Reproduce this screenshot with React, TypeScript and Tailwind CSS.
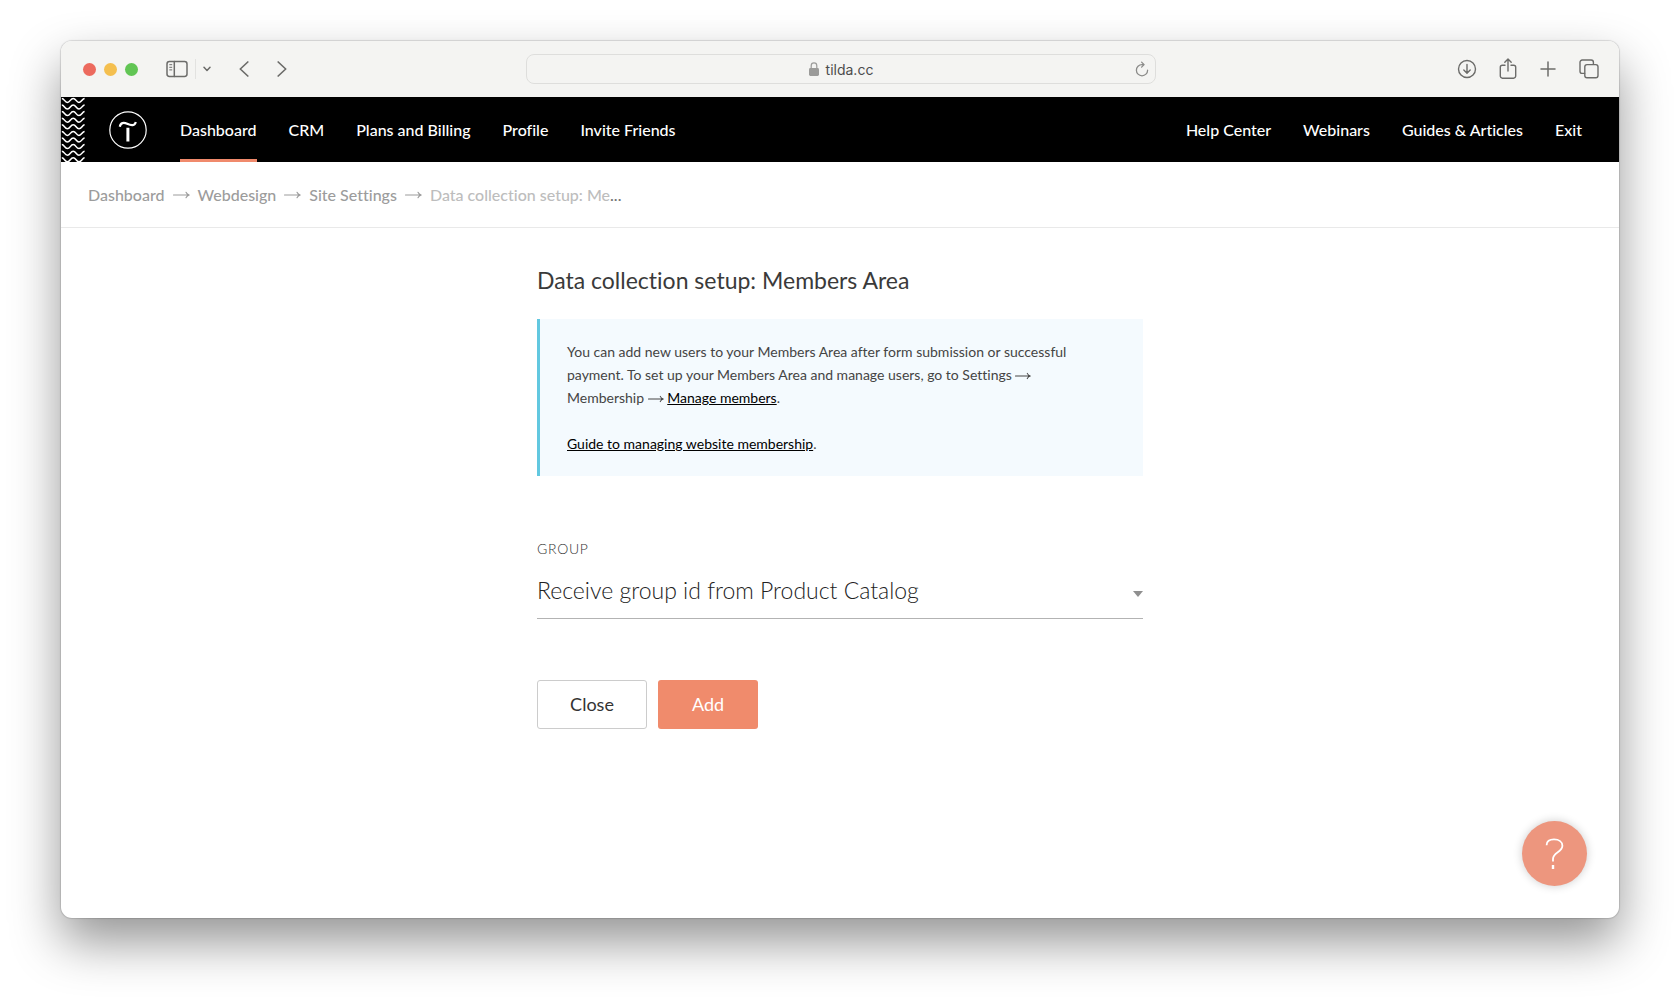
import React from "react";

const leftLinks = ["Dashboard", "CRM", "Plans and Billing", "Profile", "Invite Friends"];
const rightLinks = ["Help Center", "Webinars", "Guides & Articles", "Exit"];
const crumbs = ["Dashboard", "Webdesign", "Site Settings"];
const waveRows = [-1, 0, 1, 2, 3, 4, 5, 6, 7, 8, 9];

const stroke = {
  fill: "none",
  stroke: "currentColor",
  strokeLinecap: "round" as const,
  strokeLinejoin: "round" as const,
};

function Arrow({ className }: { className: string }) {
  return (
    <svg viewBox="0 0 17 8" className={className} {...stroke} strokeWidth="1.1" aria-hidden="true">
      <path d="M0.5 4H16M13 1.2Q14 3.4 16.2 4Q14 4.6 13 6.8" />
    </svg>
  );
}

function BrowserBar() {
  return (
    <div className="flex h-14 shrink-0 items-center bg-[#f4f4f2] text-[#6c6c6a]">
      <div className="flex flex-1 items-center pl-[22px]">
        <div className="flex gap-2">
          <span className="size-[13px] rounded-full bg-[#ec6a5e]" />
          <span className="size-[13px] rounded-full bg-[#f4bf4f]" />
          <span className="size-[13px] rounded-full bg-[#61c554]" />
        </div>
        <button type="button" aria-label="Sidebar" className="ml-7">
          <svg viewBox="0 0 22 18" className="h-[18px] w-[22px]" {...stroke} strokeWidth="1.5">
            <rect x="1" y="1.5" width="20" height="15" rx="2.4" />
            <path d="M8.3 1.5V16.5" />
            <path d="M3.7 4.7H5.8M3.7 7.3H5.8M3.7 9.9H5.8" strokeWidth="1" />
          </svg>
        </button>
        <span className="ml-[7px] h-5 w-px bg-[#e2e2e0]" />
        <button type="button" aria-label="Tab groups" className="ml-[7px]">
          <svg viewBox="0 0 8 6" className="h-[6px] w-2" {...stroke} strokeWidth="1.5">
            <path d="M1 1.2L4 4.4L7 1.2" />
          </svg>
        </button>
        <button type="button" aria-label="Back" className="ml-7">
          <svg viewBox="0 0 10 16" className="h-4 w-[10px]" {...stroke} strokeWidth="1.7">
            <path d="M8.8 1L1.3 8L8.8 15" />
          </svg>
        </button>
        <button type="button" aria-label="Forward" className="ml-7">
          <svg viewBox="0 0 10 16" className="h-4 w-[10px]" {...stroke} strokeWidth="1.7">
            <path d="M1.2 1L8.7 8L1.2 15" />
          </svg>
        </button>
      </div>

      <div className="relative flex h-[30px] w-[630px] items-center justify-center gap-[7px] rounded-lg border border-[#dededc] font-['Inter',sans-serif] text-[14px] text-[#4c4c4c]">
        <svg viewBox="0 0 10 14" className="h-[14px] w-[10px] text-[#9b9b99]" aria-hidden="true">
          <rect x="0" y="6" width="10" height="8" rx="1.4" fill="currentColor" />
          <path d="M2.2 6.5V3.8A2.8 2.9 0 0 1 7.8 3.8V6.5" fill="none" stroke="currentColor" strokeWidth="1.2" />
        </svg>
        <span>tilda.cc</span>
        <button type="button" aria-label="Reload" className="absolute right-[6px]">
          <svg viewBox="0 0 14 16" className="h-4 w-[14px] text-[#8b8b89]" {...stroke} strokeWidth="1.3">
            <path d="M12.6 9.2A5.6 5.6 0 1 1 7 3.6H8.8M6.6 1.1L9.1 3.6L6.6 6.1" />
          </svg>
        </button>
      </div>

      <div className="flex flex-1 items-center justify-end gap-[22px] pr-5">
        <button type="button" aria-label="Downloads">
          <svg viewBox="0 0 20 20" className="size-5" {...stroke} strokeWidth="1.4">
            <circle cx="10" cy="10" r="8.5" />
            <path d="M10 5.4V14M6.8 11L10 14.2L13.2 11" />
          </svg>
        </button>
        <button type="button" aria-label="Share">
          <svg viewBox="0 0 18 22" className="h-[22px] w-[18px]" {...stroke} strokeWidth="1.4">
            <path d="M6 7.2H3.4A2.1 2.1 0 0 0 1.3 9.3V18.1A2.1 2.1 0 0 0 3.4 20.2H14.6A2.1 2.1 0 0 0 16.7 18.1V9.3A2.1 2.1 0 0 0 14.6 7.2H12" />
            <path d="M9 13V1.2M5.8 4.2L9 1L12.2 4.2" />
          </svg>
        </button>
        <button type="button" aria-label="New tab">
          <svg viewBox="0 0 18 18" className="size-[18px]" {...stroke} strokeWidth="1.5">
            <path d="M9 2V16M2 9H16" />
          </svg>
        </button>
        <button type="button" aria-label="Show tabs">
          <svg viewBox="0 0 20 20" className="size-5" {...stroke} strokeWidth="1.4">
            <rect x="5.8" y="5.6" width="13.2" height="13.2" rx="2.2" />
            <path d="M5.6 14.4H3.2A2.2 2.2 0 0 1 1 12.2V3.2A2.2 2.2 0 0 1 3.2 1H12.2A2.2 2.2 0 0 1 14.4 3.2V5.4" />
          </svg>
        </button>
      </div>
    </div>
  );
}

function SiteNav() {
  return (
    <header className="flex h-[65px] shrink-0 bg-black text-[16px] font-medium text-white">
      <svg viewBox="0 0 24 65" className="h-full w-6 shrink-0" fill="none" stroke="#fff" strokeWidth="1.5" aria-hidden="true">
        {waveRows.map((row) => (
          <path
            key={row}
            transform={`translate(0 ${row * 6.6})`}
            d="M0.8 1.4C3.4 1.4 3.6 5.4 6.4 5.4S9.4 1.4 12.2 1.4S15.2 5.4 18 5.4S21.2 1.4 23.6 1.4"
          />
        ))}
      </svg>
      <a href="#home" aria-label="Tilda" className="ml-6 self-center">
        <svg viewBox="0 0 38 38" className="size-[38px]" aria-hidden="true">
          <circle cx="19" cy="19" r="18.2" fill="none" stroke="#fff" strokeWidth="1.2" />
          <path
            d="M10.8 15.8C11.6 11.6 14.6 11.2 18.2 12.8C22.4 14.8 25.8 15 26.8 11"
            fill="none"
            stroke="#fff"
            strokeWidth="2.2"
          />
          <path d="M18.9 16.8V30.4" fill="none" stroke="#fff" strokeWidth="3" />
        </svg>
      </a>
      <nav className="ml-[33px] flex gap-8">
        {leftLinks.map((l, i) => (
          <a
            key={l}
            href="#nav"
            className={
              i === 0
                ? "flex items-center border-y-[3px] border-t-transparent border-b-[#f08a6c]"
                : "flex items-center"
            }
          >
            {l}
          </a>
        ))}
      </nav>
      <nav className="ml-auto flex gap-8 pr-[37px]">
        {rightLinks.map((l) => (
          <a key={l} href="#nav" className="flex items-center">
            {l}
          </a>
        ))}
      </nav>
    </header>
  );
}

export default function App() {
  return (
    <div className="min-h-screen bg-white px-[61px] pt-[41px] pb-[81px] font-['Lato',sans-serif] [font-variant-ligatures:none]">
      <div className="relative flex min-h-[877px] flex-col overflow-hidden rounded-[11px] bg-white shadow-[0_0_1px_1px_rgba(0,0,0,0.13),0_24px_50px_rgba(0,0,0,0.42)]">
        <BrowserBar />
        <SiteNav />
        <div className="flex h-[66px] shrink-0 items-center gap-2 border-b border-[#e9e9e9] pl-[27px] text-[16px] font-medium text-[#9c9c9c]">
          {crumbs.map((c) => (
            <React.Fragment key={c}>
              <a href="#crumb">{c}</a>
              <Arrow className="h-2 w-[17px]" />
            </React.Fragment>
          ))}
          <span className="text-[#bdbdbd]">
            Data collection setup: Me<span className="text-[#777]">...</span>
          </span>
        </div>

        <main className="mx-auto w-[606px] max-w-full pt-9">
          <h1 className="text-[23px] leading-8 text-[#3a3a3a]">Data collection setup: Members Area</h1>
          <div className="mt-[23px] border-l-[3px] border-[#62c8e0] bg-[#f4fafe] py-[21px] pr-12 pl-[27px] text-[14px] leading-[23px] text-[#444]">
            <p>
              You can add new users to your Members Area after form submission or successful payment. To set up your
              Members Area and manage users, go to Settings <Arrow className="inline h-2 w-4" /> Membership{" "}
              <Arrow className="inline h-2 w-4" />{" "}
              <a href="#members" className="text-black underline">
                Manage members
              </a>
              .
            </p>
            <p className="mt-[23px]">
              <a href="#guide" className="text-black underline">
                Guide to managing website membership
              </a>
              .
            </p>
          </div>

          <form className="mt-[63px]" onSubmit={(e) => e.preventDefault()}>
            <label htmlFor="group" className="block text-[14px] leading-5 font-light tracking-wider text-[#333]">
              GROUP
            </label>
            <div className="relative mt-2 border-b border-[#b3b3b3]">
              <select
                id="group"
                className="block h-[51px] w-full appearance-none bg-transparent pb-[5px] text-[23px] font-light text-[#222] outline-none"
              >
                <option>Receive group id from Product Catalog</option>
              </select>
              <svg viewBox="0 0 10 6" className="pointer-events-none absolute top-6 right-0 h-[6px] w-[10px]" aria-hidden="true">
                <path d="M0 0H10L5 6Z" fill="#8f8f8f" />
              </svg>
            </div>
            <div className="mt-[61px] flex gap-[11px]">
              <button type="button" className="h-[49px] w-[110px] rounded-[3px] border border-[#ccc] text-[18px] text-[#333]">
                Close
              </button>
              <button type="submit" className="h-[49px] w-[100px] rounded-[3px] bg-[#f08b6c] text-[18px] text-white">
                Add
              </button>
            </div>
          </form>
        </main>

        <button
          type="button"
          aria-label="Help"
          className="absolute right-8 bottom-8 flex size-[65px] items-center justify-center rounded-full bg-[#ed967e] text-white shadow-[0_0_10px_rgba(0,0,0,0.2)]"
        >
          <svg viewBox="0 0 20 32" className="h-8 w-5" {...stroke} strokeLinecap="butt" strokeWidth="1.8">
            <path d="M1.6 7.2C1.6 3.2 4.4 1.4 9 1.4C14 1.4 17.4 3.8 17.4 7.8C17.4 14.4 8 14.2 8 21V23.4" />
            <path d="M8 27V31" strokeWidth="2.4" />
          </svg>
        </button>
      </div>
    </div>
  );
}
